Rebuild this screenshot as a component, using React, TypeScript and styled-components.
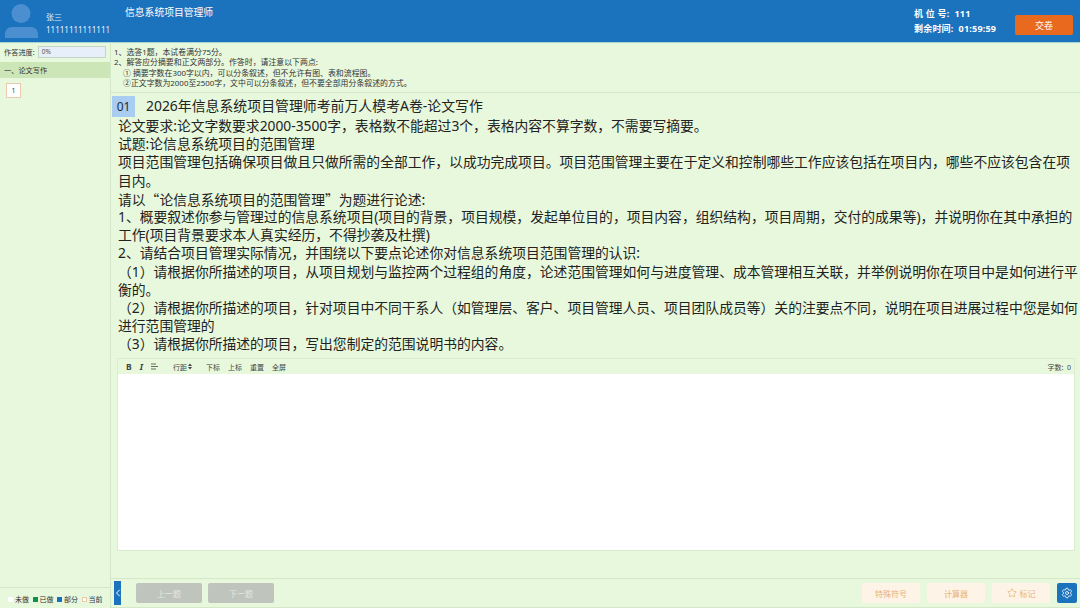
import React from 'react'
import styled, { createGlobalStyle } from 'styled-components'
import { ChevronLeft, Settings, Star } from 'lucide-react'

const GlobalStyle = createGlobalStyle`
  html, body {
    margin: 0;
    padding: 0;
    background: #e8f8dc;
    font-family: "Noto Sans", "Noto Sans CJK SC", sans-serif;
    overflow: hidden;
  }
  * { box-sizing: border-box; }
`

const Page = styled.div`
  width: 1080px;
  height: 608px;
  display: flex;
  flex-direction: column;
  background: #e8f8dc;
  color: #222;
`

const Header = styled.header`
  height: 43px;
  flex: none;
  display: flex;
  align-items: stretch;
  background: #1b72bd;
  border-bottom: 1px solid #a5d6d6;
  color: #fff;
`

const Avatar = styled.div`
  width: 46px;
  flex: none;
  padding: 4px 0 0 5px;
`

const UserInfo = styled.div`
  width: 79px;
  flex: none;
  padding-top: 10px;
  font-size: 8px;
  line-height: 13px;
  color: #e6f1fa;
`

const ExamTitle = styled.div`
  flex: 1;
  padding-top: 5px;
  font-size: 9.8px;
  line-height: 16px;
`

const SeatInfo = styled.div`
  width: 101px;
  flex: none;
  padding-top: 7px;
  font-size: 9px;
  line-height: 14.5px;
  font-weight: 700;
  letter-spacing: 0.2px;
`

const SubmitButton = styled.button`
  width: 58px;
  height: 20px;
  margin: 15px 7px 0 0;
  flex: none;
  border: none;
  border-radius: 2px;
  background: #e96a1f;
  color: #fff;
  font: inherit;
  font-size: 9px;
  padding: 0;
`

const Body = styled.div`
  flex: 1;
  min-height: 0;
  display: flex;
`

const Sidebar = styled.aside`
  width: 111px;
  flex: none;
  display: flex;
  flex-direction: column;
  border-right: 1px solid #d4e8c8;
`

const ProgressRow = styled.div`
  height: 12px;
  margin-top: 3px;
  padding-left: 4px;
  display: flex;
  align-items: center;
  font-size: 7.2px;
  color: #333;
`

const ProgressBar = styled.div`
  width: 68px;
  height: 12px;
  margin-left: 3px;
  padding-left: 3px;
  background: #e6effa;
  border: 1px solid #c3d3c4;
  font-size: 6.5px;
  line-height: 10px;
  color: #555;
`

const SectionTitle = styled.div`
  height: 16px;
  margin-top: 4px;
  padding-left: 4px;
  background: #cde6b8;
  font-size: 7.2px;
  line-height: 16px;
  color: #333;
`

const NumberBox = styled.div`
  width: 15px;
  height: 15px;
  margin: 5px 0 0 6px;
  background: #fff;
  border: 1px solid #ecc9ac;
  font-size: 7px;
  line-height: 13px;
  text-align: center;
  color: #444;
`

const Legend = styled.div`
  margin-top: auto;
  height: 21px;
  padding: 2px 0 0 8px;
  display: flex;
  align-items: center;
  border-top: 1px solid #d4e8c8;
  font-size: 7px;
  color: #333;
`

const LegendItem = styled.span`
  width: 24.500px;
  flex: none;
  display: flex;
  align-items: center;
  gap: 2px;
`

const Swatch = styled.i<{ $bg: string; $line?: string }>`
  width: 5px;
  height: 5px;
  display: block;
  background: ${p => p.$bg};
  border: ${p => (p.$line ? `1px solid ${p.$line}` : 'none')};
`

const Main = styled.main`
  flex: 1;
  min-width: 0;
  display: flex;
  flex-direction: column;
`

const Notes = styled.div`
  height: 50px;
  flex: none;
  padding: 4px 0 0 3px;
  font-size: 7.9px;
  line-height: 10.3px;
  color: #333;
  border-bottom: 1px solid #d4e8c8;
`

const NoteIndent = styled.div`
  padding-left: 9px;
`

const Question = styled.section`
  flex: none;
  height: 265px;
  padding: 2px 0 0 7px;
  font-size: 13.8px;
  line-height: 18.2px;
  color: #222;
`

const QuestionHead = styled.div`
  display: flex;
  align-items: center;
  margin-left: -6px;
  height: 22px;
`

const QuestionNo = styled.span`
  width: 23px;
  height: 21px;
  flex: none;
  background: #a9cdf0;
  font-size: 12px;
  line-height: 21px;
  text-align: center;
  color: #1d2a3a;
`

const QuestionTitle = styled.span`
  margin-left: 11px;
  font-size: 13.9px;
`

const Paragraph = styled.div<{ $wideQuotes?: boolean }>`
  font-family: ${p => (p.$wideQuotes ? '"Noto Sans CJK SC", sans-serif' : 'inherit')};
`

const Editor = styled.div`
  flex: none;
  height: 193px;
  margin: 0 5px 0 6px;
  display: flex;
  flex-direction: column;
  border: 1px solid #dcecd0;
`

const Toolbar = styled.div`
  height: 15px;
  flex: none;
  display: flex;
  align-items: center;
  padding: 0 3px 0 8px;
  font-size: 7px;
  color: #444;
  background: #e8f8dc;
`

const ToolGroup = styled.div<{ $gap: number; $left?: number }>`
  display: flex;
  align-items: center;
  gap: ${p => p.$gap}px;
  margin-left: ${p => p.$left ?? 0}px;
`

const ToolGlyph = styled.span<{ $italic?: boolean }>`
  font-weight: 700;
  font-size: 8.500px;
  font-style: ${p => (p.$italic ? 'italic' : 'normal')};
`

const WordCount = styled.div`
  margin-left: auto;
`

const EditorArea = styled.div`
  flex: 1;
  background: #fff;
`

const Footer = styled.footer`
  margin-top: auto;
  height: 30px;
  flex: none;
  display: flex;
  align-items: center;
  border-top: 1px solid #d4e8c8;
  border-bottom: 1px solid #d4e8c8;
`

const CollapseTab = styled.div`
  width: 7px;
  height: 24px;
  margin-left: 3px;
  flex: none;
  display: flex;
  align-items: center;
  justify-content: center;
  background: #1b72bd;
  color: #fff;
`

const NavButton = styled.button`
  width: 66px;
  height: 20px;
  border: none;
  border-radius: 2px;
  background: #bfc4bd;
  color: #e4e8e2;
  font: inherit;
  font-size: 8px;
  padding: 0;
  &:first-of-type { margin-left: 15px; }
  & + & { margin-left: 6px; }
`

const ToolButtons = styled.div`
  margin-left: auto;
  margin-right: 3px;
  display: flex;
  align-items: center;
  gap: 7px;
`

const ToolButton = styled.button`
  width: 58px;
  height: 20px;
  border: none;
  border-radius: 2px;
  background: #fdf3e6;
  color: #e8b27c;
  font: inherit;
  font-size: 8px;
  padding: 0;
  display: flex;
  align-items: center;
  justify-content: center;
  gap: 3px;
`

const SettingsButton = styled.button`
  width: 20px;
  height: 20px;
  border: none;
  border-radius: 2px;
  background: #1b72bd;
  color: #fff;
  padding: 0;
  display: flex;
  align-items: center;
  justify-content: center;
`

const paragraphs = [
  '论文要求:论文字数要求2000-3500字，表格数不能超过3个，表格内容不算字数，不需要写摘要。',
  '试题:论信息系统项目的范围管理',
  '项目范围管理包括确保项目做且只做所需的全部工作，以成功完成项目。项目范围管理主要在于定义和控制哪些工作应该包括在项目内，哪些不应该包含在项目内。',
  '请以“论信息系统项目的范围管理”为题进行论述:',
  '1、概要叙述你参与管理过的信息系统项目(项目的背景，项目规模，发起单位目的，项目内容，组织结构，项目周期，交付的成果等)，并说明你在其中承担的工作(项目背景要求本人真实经历，不得抄袭及杜撰)',
  '2、请结合项目管理实际情况，并围绕以下要点论述你对信息系统项目范围管理的认识:',
  '（1）请根据你所描述的项目，从项目规划与监控两个过程组的角度，论述范围管理如何与进度管理、成本管理相互关联，并举例说明你在项目中是如何进行平衡的。',
  '（2）请根据你所描述的项目，针对项目中不同干系人（如管理层、客户、项目管理人员、项目团队成员等）关的注要点不同，说明在项目进展过程中您是如何进行范围管理的',
  '（3）请根据你所描述的项目，写出您制定的范围说明书的内容。',
]

export default function App() {
  return (
    <Page>
      <GlobalStyle />
      <Header>
        <Avatar>
          <svg width="33" height="34" viewBox="0 0 33 34">
            <circle cx="16" cy="9.500" r="9.500" fill="#4c8fd0" />
            <path d="M0 34v-4c0-4 3-7 7-7h19c4 0 7 3 7 7v4z" fill="#4c8fd0" />
          </svg>
        </Avatar>
        <UserInfo>
          <div>张三</div>
          <div>11111111111111</div>
        </UserInfo>
        <ExamTitle>信息系统项目管理师</ExamTitle>
        <SeatInfo>
          <div>机 位 号:&nbsp; 111</div>
          <div>剩余时间:&nbsp; 01:59:59</div>
        </SeatInfo>
        <SubmitButton>交卷</SubmitButton>
      </Header>
      <Body>
        <Sidebar>
          <ProgressRow>
            作答进度:
            <ProgressBar>0%</ProgressBar>
          </ProgressRow>
          <SectionTitle>一、论文写作</SectionTitle>
          <NumberBox>1</NumberBox>
          <Legend>
            <LegendItem><Swatch $bg="#fff" />未做</LegendItem>
            <LegendItem><Swatch $bg="#0e9150" />已做</LegendItem>
            <LegendItem><Swatch $bg="#1b6fc0" />部分</LegendItem>
            <LegendItem><Swatch $bg="#fff" $line="#ecc9ac" />当前</LegendItem>
          </Legend>
        </Sidebar>
        <Main>
          <Notes>
            <div>1、选答1题，本试卷满分75分。</div>
            <div>2、解答应分摘要和正文两部分。作答时，请注意以下两点:</div>
            <NoteIndent>① 摘要字数在300字以内，可以分条叙述，但不允许有图、表和流程图。</NoteIndent>
            <NoteIndent>②正文字数为2000至2500字，文中可以分条叙述，但不要全部用分条叙述的方式。</NoteIndent>
          </Notes>
          <Question>
            <QuestionHead>
              <QuestionNo>01</QuestionNo>
              <QuestionTitle>2026年信息系统项目管理师考前万人模考A卷-论文写作</QuestionTitle>
            </QuestionHead>
            {paragraphs.map(text => (
              <Paragraph key={text} $wideQuotes={text.includes('“')}>{text}</Paragraph>
            ))}
          </Question>
          <Editor>
            <Toolbar>
              <ToolGroup $gap={8}>
                <ToolGlyph>B</ToolGlyph>
                <ToolGlyph $italic>I</ToolGlyph>
                <svg width="7" height="7" viewBox="0 0 7 7">
                  <path d="M0 1h5M0 3.500h7M0 6h5" stroke="#444" strokeWidth="0.8" />
                </svg>
              </ToolGroup>
              <ToolGroup $gap={1} $left={15}>
                行距
                <svg width="4" height="7" viewBox="0 0 4 7">
                  <path d="M0 3l2-2.500 2 2.500zM0 4l2 2.500 2-2.500z" fill="#444" />
                </svg>
              </ToolGroup>
              <ToolGroup $gap={8} $left={14}>
                <span>下标</span>
                <span>上标</span>
                <span>重置</span>
                <span>全屏</span>
              </ToolGroup>
              <WordCount>字数:&nbsp; 0</WordCount>
            </Toolbar>
            <EditorArea />
          </Editor>
          <Footer>
            <CollapseTab>
              <ChevronLeft size={12} strokeWidth={2} style={{ flex: 'none' }} />
            </CollapseTab>
            <NavButton>上一题</NavButton>
            <NavButton>下一题</NavButton>
            <ToolButtons>
              <ToolButton>特殊符号</ToolButton>
              <ToolButton>计算器</ToolButton>
              <ToolButton>
                <Star size={10} strokeWidth={1.8} />
                标记
              </ToolButton>
              <SettingsButton>
                <Settings size={12} strokeWidth={1.6} />
              </SettingsButton>
            </ToolButtons>
          </Footer>
        </Main>
      </Body>
    </Page>
  )
}
